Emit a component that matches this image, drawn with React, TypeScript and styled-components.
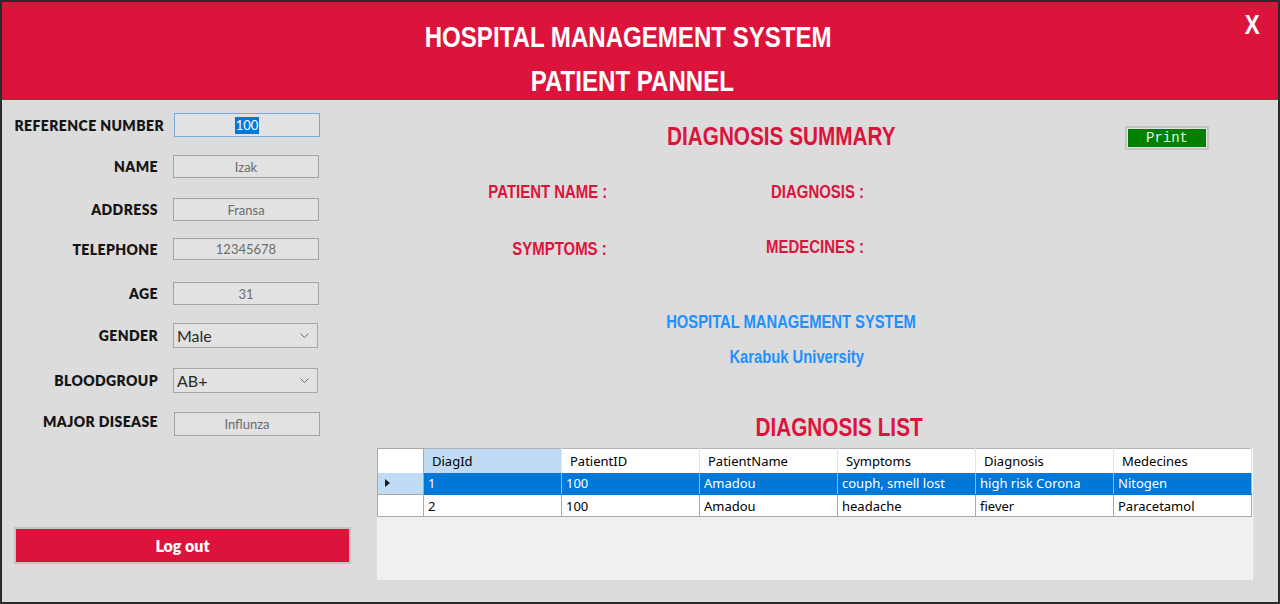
import React from "react";
import styled, { createGlobalStyle } from "styled-components";

const Global = createGlobalStyle`
  html, body { margin: 0; padding: 0; }
  body { width: 1280px; height: 604px; overflow: hidden; background: #dcdcdc; }
  * { box-sizing: border-box; }
`;

const ARIAL = `"Liberation Sans", Arial, sans-serif`;
const GOTHIC = `Lato, "Noto Sans", sans-serif`;
const UI = `"Noto Sans", "Open Sans", sans-serif`;
const CRIMSON = "#dc143c";
const SQUEEZE = 0.83;

const Window = styled.div`
  width: 1280px;
  height: 604px;
  border: 2px solid #2b2b2b;
  background: #dcdcdc;
  display: flex;
  flex-direction: column;
  overflow: hidden;
`;

const Header = styled.header`
  height: 98px;
  flex: none;
  background: ${CRIMSON};
  display: grid;
  grid-template-columns: 1fr auto 1fr;
  color: #fff;
  font-family: ${ARIAL};
  font-weight: bold;
`;

const TitleBlock = styled.div`
  grid-column: 2;
  padding-top: 13px;
  padding-right: 24px;
`;

const TitleLine = styled.div<{ $shift?: number }>`
  font-size: 29px;
  line-height: 44px;
  text-align: center;
  white-space: nowrap;
  padding-left: ${(p) => (p.$shift ?? 0) * 2}px;
  transform: scaleX(${SQUEEZE});
`;

const CloseX = styled.div`
  grid-column: 3;
  justify-self: end;
  padding: 10px 22px 0 0;
  font-size: 27px;
  line-height: 26px;
  transform: scaleX(${SQUEEZE});
  transform-origin: right center;
`;

const Body = styled.div`
  flex: 1;
  display: flex;
`;

const LeftPanel = styled.section`
  width: 360px;
  flex: none;
  padding-left: 12px;
  display: flex;
  flex-direction: column;
`;

const FormRow = styled.div<{ $gap: number; $h: number }>`
  display: flex;
  align-items: center;
  margin-top: ${(p) => p.$gap}px;
  height: ${(p) => p.$h}px;
`;

const Label = styled.div<{ $pull?: number; $raise?: number }>`
  width: ${(p) => 144 + (p.$pull ?? 0)}px;
  flex: none;
  text-align: right;
  white-space: nowrap;
  margin-right: ${(p) => -(p.$pull ?? 0)}px;
  margin-bottom: ${(p) => (p.$raise ?? 0) * 2}px;
  font-family: ${GOTHIC};
  font-weight: 800;
  font-size: 14px;
  letter-spacing: 0.4px;
  color: #151515;
`;

const Field = styled.div<{ $focus?: boolean; $offset?: number }>`
  width: 146px;
  height: 100%;
  margin-left: ${(p) => 15 + (p.$offset ?? 0)}px;
  border: 1px solid ${(p) => (p.$focus ? "#7aa9d9" : "#a3a3a3")};
  background: #e2e2e2;
  display: flex;
  align-items: center;
  justify-content: center;
  font-family: ${GOTHIC};
  font-size: 13px;
  color: #6c6c6c;
`;

const Selected = styled.span`
  background: #0078d7;
  color: #fff;
  padding: 0 1px;
  line-height: 17px;
`;

const Select = styled.div`
  width: 145px;
  height: 100%;
  margin-left: 15px;
  border: 1px solid #a8a8a8;
  background: #e2e2e2;
  display: flex;
  align-items: center;
  justify-content: space-between;
  padding: 0 8px 0 3px;
  font-family: ${GOTHIC};
  font-size: 16px;
  color: #2a2a2a;
`;

const LogoutButton = styled.button`
  margin-top: 91px;
  width: 337px;
  height: 37px;
  border: 2px solid #c4c4c4;
  background: ${CRIMSON};
  color: #fff;
  font-family: ${GOTHIC};
  font-weight: 800;
  font-size: 16px;
  padding: 0;
  cursor: pointer;
`;

const RightPanel = styled.section`
  flex: 1;
  padding: 0 25px 0 15px;
  display: flex;
  flex-direction: column;
`;

const TopRow = styled.div`
  margin-top: 21px;
  height: 30px;
  display: flex;
  align-items: center;
`;

const Heading = styled.h2`
  margin: 0 0 0 290px;
  font-family: ${ARIAL};
  font-weight: bold;
  font-size: 25px;
  line-height: 30px;
  color: ${CRIMSON};
  white-space: nowrap;
  transform: scaleX(${SQUEEZE});
  transform-origin: left center;
`;

const PrintButton = styled.button`
  margin-left: auto;
  margin-right: 44px;
  margin-top: 4px;
  width: 84px;
  height: 24px;
  border: 2px solid #c2c2c2;
  box-shadow: inset 0 0 0 1px #e4e4e4;
  background: #008000;
  color: #e4f7e4;
  font-family: "Liberation Mono", "Courier New", monospace;
  font-size: 14px;
  padding: 0;
`;

const SummaryGrid = styled.div`
  margin-top: 30px;
  display: grid;
  grid-template-columns: 230px 257px;
  grid-auto-rows: 22px;
  row-gap: 34px;
  justify-items: end;
`;

const SummaryLabel = styled.div<{ $dy?: number }>`
  font-family: ${ARIAL};
  font-weight: bold;
  font-size: 18px;
  line-height: 22px;
  color: ${CRIMSON};
  white-space: nowrap;
  transform: translateY(${(p) => p.$dy ?? 0}px) scaleX(${SQUEEZE});
  transform-origin: right center;
`;

const CaptionBlock = styled.div`
  margin-top: 52px;
  width: 828px;
  display: flex;
  flex-direction: column;
  row-gap: 13px;
`;

const Caption = styled.div<{ $shift?: number }>`
  font-family: ${ARIAL};
  font-weight: bold;
  font-size: 18px;
  line-height: 22px;
  color: #1e90ff;
  text-align: center;
  white-space: nowrap;
  padding-left: ${(p) => (p.$shift ?? 0) * 2}px;
  transform: scaleX(0.82);
`;

const ListHeading = styled.h2`
  margin: 44px 0 0;
  padding-left: 58px;
  font-family: ${ARIAL};
  font-weight: bold;
  font-size: 25px;
  line-height: 30px;
  color: ${CRIMSON};
  text-align: center;
  white-space: nowrap;
  width: 876px;
  transform: scaleX(${SQUEEZE});
`;

const TableBox = styled.div`
  margin-top: 6px;
  width: 876px;
  height: 132px;
  background: #f0f0f0;
  border-right: 1px solid #f7f7f7;
`;

const Grid = styled.table`
  width: 100%;
  table-layout: fixed;
  border-collapse: collapse;
  font-family: ${UI};
  font-size: 13px;
`;

const HeadCell = styled.th<{ $active?: boolean }>`
  height: 24px;
  padding: 0 0 0 8px;
  text-align: left;
  font-weight: normal;
  color: #000;
  background: ${(p) => (p.$active ? "#bfdcf4" : "#fff")};
  border-top: 1px solid #b4b4b4;
  border-right: 1px solid #e3e3e3;
  white-space: nowrap;
  overflow: hidden;
`;

const CornerCell = styled.th`
  width: 46px;
  height: 24px;
  background: #fff;
  border: 1px solid #a8a8a8;
  border-bottom: none;
`;

const RowHead = styled.td<{ $current?: boolean }>`
  height: 22px;
  padding: 0 0 0 7px;
  background: ${(p) => (p.$current ? "#bfdcf4" : "#fff")};
  border-left: 1px solid #a8a8a8;
  border-right: 1px solid #a8a8a8;
  border-bottom: 1px solid #a8a8a8;
  vertical-align: middle;
`;

const Cell = styled.td<{ $selected?: boolean }>`
  height: 22px;
  padding: 0 0 0 4px;
  background: ${(p) => (p.$selected ? "#0078d7" : "#fff")};
  color: ${(p) => (p.$selected ? "#fff" : "#000")};
  border-right: 1px solid ${(p) => (p.$selected ? "#8fb9e3" : "#a8a8a8")};
  border-bottom: 1px solid ${(p) => (p.$selected ? "#0078d7" : "#a8a8a8")};
  white-space: nowrap;
  overflow: hidden;
`;

const Chevron = () => (
  <svg width="9" height="6" viewBox="0 0 9 6">
    <polyline points="0.5,0.5 4.5,4.5 8.5,0.5" fill="none" stroke="#6a6a6a" strokeWidth="1" />
  </svg>
);

const Arrow = () => (
  <svg width="5" height="8" viewBox="0 0 5 8" style={{ display: "block" }}>
    <polygon points="0,0 5,4 0,8" fill="#1a1a1a" />
  </svg>
);

const columns = ["DiagId", "PatientID", "PatientName", "Symptoms", "Diagnosis", "Medecines"];
const rows = [
  ["1", "100", "Amadou", "couph, smell lost", "high risk Corona", "Nitogen"],
  ["2", "100", "Amadou", "headache", "fiever", "Paracetamol"],
];

export default function App() {
  return (
    <>
      <Global />
      <Window>
        <Header>
          <TitleBlock>
            <TitleLine>HOSPITAL MANAGEMENT SYSTEM</TitleLine>
            <TitleLine $shift={5}>PATIENT PANNEL</TitleLine>
          </TitleBlock>
          <CloseX>X</CloseX>
        </Header>
        <Body>
          <LeftPanel>
            <FormRow $gap={13} $h={24}>
              <Label $pull={6}>REFERENCE NUMBER</Label>
              <Field $focus $offset={1}>
                <Selected>100</Selected>
              </Field>
            </FormRow>
            <FormRow $gap={18} $h={23}>
              <Label>NAME</Label>
              <Field>Izak</Field>
            </FormRow>
            <FormRow $gap={20} $h={23}>
              <Label>ADDRESS</Label>
              <Field>Fransa</Field>
            </FormRow>
            <FormRow $gap={17} $h={22}>
              <Label>TELEPHONE</Label>
              <Field>12345678</Field>
            </FormRow>
            <FormRow $gap={22} $h={23}>
              <Label>AGE</Label>
              <Field>31</Field>
            </FormRow>
            <FormRow $gap={18} $h={25}>
              <Label>GENDER</Label>
              <Select>
                <span>Male</span>
                <Chevron />
              </Select>
            </FormRow>
            <FormRow $gap={20} $h={25}>
              <Label>BLOODGROUP</Label>
              <Select>
                <span>AB+</span>
                <Chevron />
              </Select>
            </FormRow>
            <FormRow $gap={19} $h={24}>
              <Label $raise={3}>MAJOR DISEASE</Label>
              <Field $offset={1}>Influnza</Field>
            </FormRow>
            <LogoutButton>Log out</LogoutButton>
          </LeftPanel>
          <RightPanel>
            <TopRow>
              <Heading>DIAGNOSIS SUMMARY</Heading>
              <PrintButton>Print</PrintButton>
            </TopRow>
            <SummaryGrid>
              <SummaryLabel>PATIENT NAME :</SummaryLabel>
              <SummaryLabel>DIAGNOSIS :</SummaryLabel>
              <SummaryLabel $dy={1}>SYMPTOMS :</SummaryLabel>
              <SummaryLabel $dy={-1}>MEDECINES :</SummaryLabel>
            </SummaryGrid>
            <CaptionBlock>
              <Caption>HOSPITAL MANAGEMENT SYSTEM</Caption>
              <Caption $shift={7}>Karabuk University</Caption>
            </CaptionBlock>
            <ListHeading>DIAGNOSIS LIST</ListHeading>
            <TableBox>
              <Grid>
                <thead>
                  <tr>
                    <CornerCell />
                    {columns.map((c, i) => (
                      <HeadCell key={c} $active={i === 0}>
                        {c}
                      </HeadCell>
                    ))}
                  </tr>
                </thead>
                <tbody>
                  {rows.map((r, ri) => (
                    <tr key={ri}>
                      <RowHead $current={ri === 0}>{ri === 0 ? <Arrow /> : null}</RowHead>
                      {r.map((v, ci) => (
                        <Cell key={ci} $selected={ri === 0}>
                          {v}
                        </Cell>
                      ))}
                    </tr>
                  ))}
                </tbody>
              </Grid>
            </TableBox>
          </RightPanel>
        </Body>
      </Window>
    </>
  );
}
